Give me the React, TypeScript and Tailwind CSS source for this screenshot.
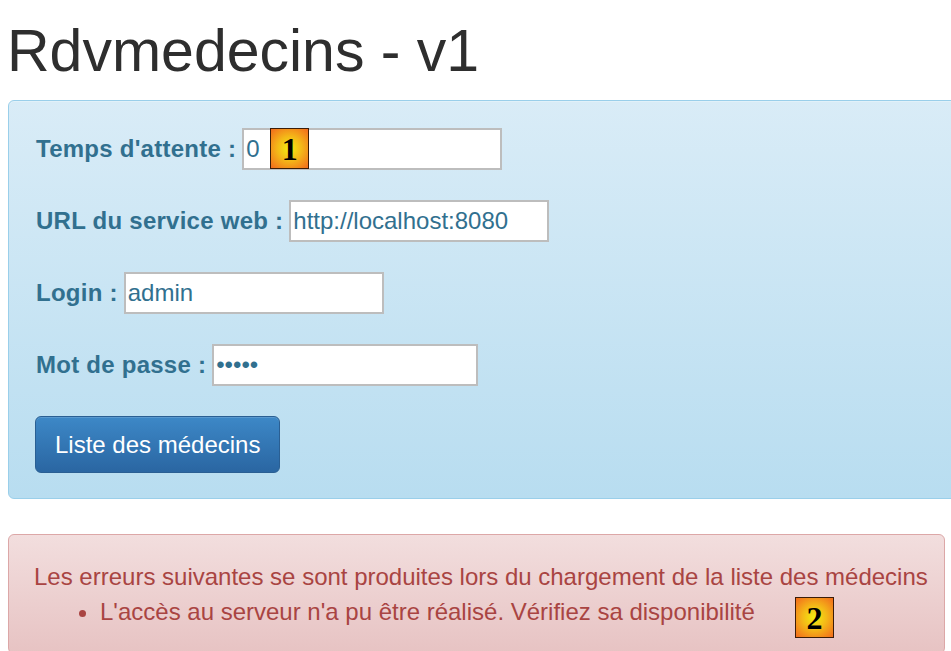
import React from "react";

const fields = [
  { label: "Temps d'attente :", value: "0", type: "text", width: "w-[260px]", badge: true },
  { label: "URL du service web :", value: "http://localhost:8080", type: "text", width: "w-[260px]", badge: false },
  { label: "Login :", value: "admin", type: "text", width: "w-[260px]", badge: false },
  { label: "Mot de passe :", value: "admin", type: "password", width: "w-[266px]", badge: false },
];

function Badge({ n, className }: { n: string; className: string }) {
  return (
    <span
      className={`absolute flex h-[41px] w-[39px] items-center justify-center border border-[#3b1d08] bg-[radial-gradient(circle_at_50%_50%,#f2ee10_0%,#f4b818_45%,#f26a1c_100%)] font-['Liberation_Serif',serif] text-[32px] leading-none font-bold text-black ${className}`}
    >
      {n}
    </span>
  );
}

export default function App() {
  return (
    <div className="h-screen w-full overflow-hidden bg-white font-['Liberation_Sans',Arial,sans-serif]">
      <h1 className="mt-[18px] pl-[7px] text-[59px] leading-[66px] text-[#2e2e2e]">Rdvmedecins - v1</h1>

      {/* Formulaire de configuration */}
      <div className="ml-2 mt-[16px] w-[980px] rounded-[6px] border border-[#9acfea] bg-gradient-to-b from-[#d9ecf7] to-[#b8ddf0] pb-[25px] pl-[26px] pt-[27px] shadow-[inset_0_1px_0_rgba(255,255,255,0.25)]">
        <div className="flex flex-col gap-[30px]">
          {fields.map((f) => (
            <div key={f.label} className="flex items-center gap-[6px]">
              <label className="pl-[1px] text-[24px] font-bold tracking-[0.25px] text-[#31708f]">{f.label}</label>
              <div className="relative">
                <input
                  type={f.type}
                  defaultValue={f.value}
                  readOnly
                  className={`h-[42px] ${f.width} border-2 border-[#bdbdbd] bg-white pl-[2px] text-[24px] text-[#31708f] outline-none`}
                />
                {f.badge && <Badge n="1" className="left-[28px] top-0" />}
              </div>
            </div>
          ))}
          <div>
            <button className="h-[57px] rounded-[6px] border border-[#2a5f93] bg-gradient-to-b from-[#3d88c7] to-[#2a66a2] px-[19px] text-[24px] text-white shadow-[inset_0_1px_0_rgba(255,255,255,0.15)]">
              Liste des médecins
            </button>
          </div>
        </div>
      </div>

      {/* Erreurs */}
      <div className="relative ml-2 mt-[35px] w-[937px] rounded-[6px] border border-[#dca7a7] bg-gradient-to-b from-[#f2dede] to-[#e7c3c3] pb-[24px] pl-[25px] pt-[24px] text-[24px] leading-[35px] text-[#a94442]">
        <p>Les erreurs suivantes se sont produites lors du chargement de la liste des médecins</p>
        <ul className="list-disc pl-[66px]">
          <li>L'accès au serveur n'a pu être réalisé. Vérifiez sa disponibilité</li>
        </ul>
        <Badge n="2" className="left-[786px] top-[62px]" />
      </div>
    </div>
  );
}
